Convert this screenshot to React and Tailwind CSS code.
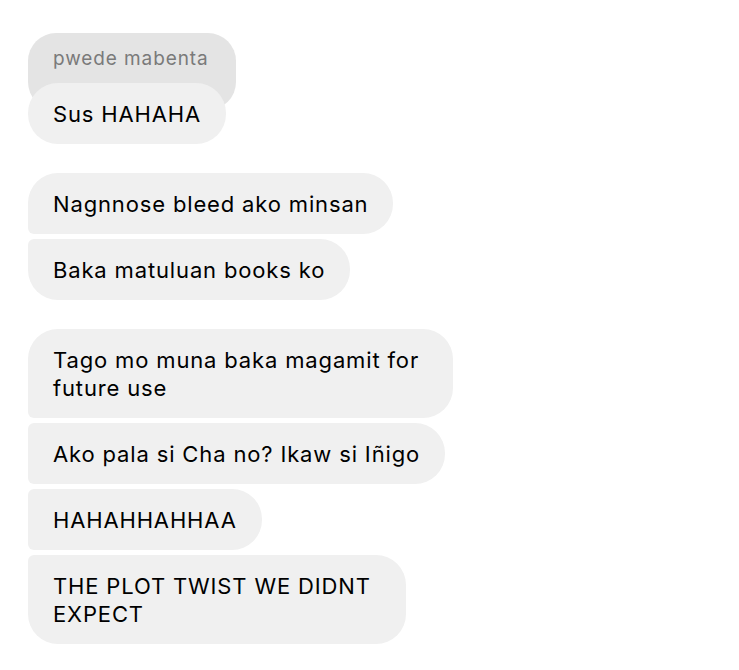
import React from 'react';

const groups = [
    ['Nagnnose bleed ako minsan', 'Baka matuluan books ko'],
    [
        'Tago mo muna baka magamit for future use',
        'Ako pala si Cha no? Ikaw si Iñigo',
        'HAHAHHAHHAA',
        'THE PLOT TWIST WE DIDNT EXPECT',
    ],
];

// left corners depend on where the bubble sits in its group
const cornerFor = (i, n) => {
    if (n === 1) return 'rounded-[30px]';
    if (i === 0) return 'rounded-r-[30px] rounded-tl-[30px] rounded-bl-[6px]';
    if (i === n - 1) return 'rounded-r-[30px] rounded-tl-[6px] rounded-bl-[30px]';
    return 'rounded-r-[30px] rounded-l-[6px]';
};

const wraps = {
    'Tago mo muna baka magamit for future use': 'max-w-[425px]',
    'THE PLOT TWIST WE DIDNT EXPECT': 'max-w-[378px]',
};

const Bubble = ({ text, corner }) => (
    <div
        className={`self-start bg-[#f0f0f0] text-black px-[25px] pt-[17px] pb-[16px] text-[22px] leading-[28px] tracking-[0.85px] ${corner} ${wraps[text] || ''}`}
    >
        {text}
    </div>
);

const App = () => {
    return (
        <div
            className="w-[739px] h-[670px] bg-white pl-[28px] pt-[33px] flex flex-col overflow-hidden"
            style={{ fontFamily: 'Inter, "Liberation Sans", sans-serif' }}
        >
            {/* Reply with quoted message */}
            <div className="flex flex-col items-start">
                <div className="bg-[#e4e4e4] text-[#7a7a7a] text-[19px] leading-[24px] tracking-[0.9px] pl-[25px] pr-[27px] pt-[14px] pb-[39px] rounded-[28px]">
                    pwede mabenta
                </div>
                <div className="-mt-[27px] relative bg-[#f0f0f0] text-black px-[25px] pt-[17px] pb-[16px] text-[22px] leading-[28px] tracking-[0.85px] rounded-[30px]">
                    Sus HAHAHA
                </div>
            </div>

            {groups.map((msgs, g) => (
                <div key={g} className="flex flex-col gap-[5px] mt-[29px]">
                    {msgs.map((m, i) => (
                        <Bubble key={i} text={m} corner={cornerFor(i, msgs.length)} />
                    ))}
                </div>
            ))}
        </div>
    );
};

export default App;
